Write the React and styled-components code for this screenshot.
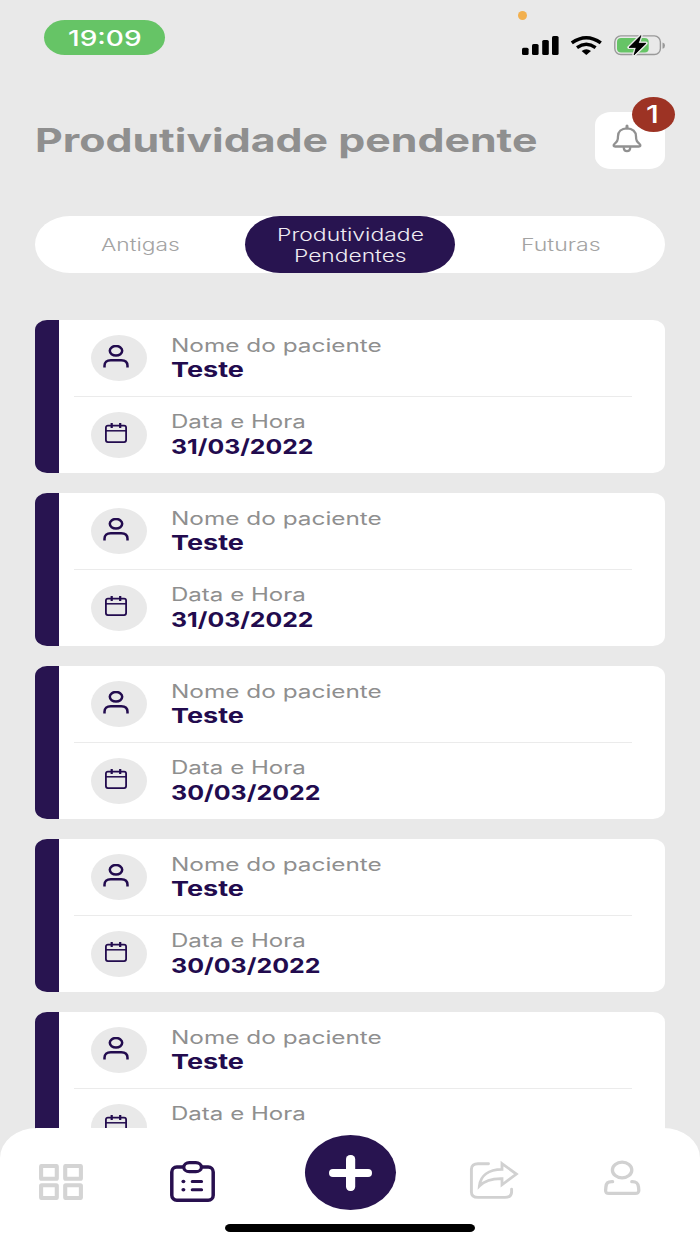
import React, {useLayoutEffect, useRef, useState} from 'react';
import styled, {createGlobalStyle} from 'styled-components';


const GlobalStyle = createGlobalStyle`
    * {
        box-sizing: border-box;
    }
    body {
        margin: 0;
        background-color: #e9e9e9;
        font-family: Inter, "Liberation Sans", sans-serif;
    }
    svg {
        display: block;
        flex-shrink: 0;
    }
`;

const Screen = styled.div`
    position: relative;
    width: 700px;
    height: 1244px;
    overflow: hidden;
    background-color: #e9e9e9;
`;

const WideBox = styled.span`
    display: block;
    width: ${({$width}) => $width}px;
    white-space: nowrap;
`;

const WideInner = styled.span`
    display: inline-block;
    transform-origin: 0 50%;
`;

const StatusBar = styled.div`
    display: flex;
    justify-content: space-between;
    height: 70px;
    padding: 20px 35px 0 44px;
`;

const Clock = styled.div`
    display: flex;
    justify-content: center;
    width: 121px;
    height: 35px;
    border-radius: 21px / 17.5px;
    background-color: #66c466;
    color: #fff;
    font-size: 22px;
    font-weight: 500;
    line-height: 36px;
`;

const StatusIcons = styled.div`
    display: flex;
    gap: 11px;
    padding-top: 15px;
`;

const RecordingDot = styled.span`
    position: absolute;
    left: 518px;
    top: 11px;
    width: 9px;
    height: 9px;
    border-radius: 50%;
    background-color: #f2b04f;
`;

const Header = styled.header`
    display: flex;
    justify-content: space-between;
    align-items: center;
    margin-top: 42px;
    height: 57px;
    padding: 0 35px 0 35px;
`;

const Title = styled.h1`
    margin: 0;
    color: #8f8f8f;
    font-size: 32px;
    font-weight: 700;
    line-height: 57px;
`;

const BellButton = styled.button`
    position: relative;
    display: flex;
    justify-content: center;
    width: 70px;
    height: 57px;
    padding: 12px 6px 0 0;
    border: 0;
    border-radius: 16px / 13px;
    background-color: #fff;
`;

const Badge = styled.span`
    position: absolute;
    top: -15px;
    right: -10px;
    display: flex;
    justify-content: center;
    width: 43px;
    height: 35px;
    padding-right: 5px;
    border-radius: 50%;
    background-color: #9d3324;
    color: #fff;
    font-family: Inter, "Liberation Sans", sans-serif;
    font-size: 24px;
    font-weight: 500;
    line-height: 35px;
`;

const Tabs = styled.div`
    display: flex;
    margin: 47px 35px 0;
    height: 57px;
    border-radius: 35px / 28.5px;
    background-color: #fff;
`;

const Tab = styled.div`
    display: flex;
    flex: 1;
    flex-direction: column;
    align-items: center;
    justify-content: center;
    padding: 2px 0 0 1px;
    border-radius: 35px / 28.5px;
    background-color: ${({$active}) => $active ? '#281450' : 'transparent'};
    color: ${({$active}) => $active ? '#efecf3' : '#a3a3a3'};
    font-size: 17px;
    font-weight: 300;
    line-height: 21px;
`;

const List = styled.main`
    display: flex;
    flex-direction: column;
    gap: 20px;
    padding: 47px 35px 0;
`;

const Card = styled.section`
    flex-shrink: 0;
    height: 153px;
    padding: 0 33.5px 0 39px;
    border-radius: 12px / 10px;
    background: linear-gradient(to right, #281450 24.5px, #fff 24.5px);
`;

const Row = styled.div`
    display: flex;
    align-items: center;
    height: ${({$last}) => $last ? 75 : 76}px;
    padding-left: 17px;
`;

const Divider = styled.div`
    height: 1px;
    background-color: #ebebeb;
`;

const IconCircle = styled.div`
    display: flex;
    align-items: center;
    justify-content: center;
    width: 56px;
    height: 46px;
    padding: 0 6px 4px 0;
    border-radius: 50%;
    background-color: #e9e9e9;
`;

const Info = styled.div`
    display: flex;
    flex-direction: column;
    padding: 0 0 0 24px;
`;

const Label = styled.span`
    color: #8f8f8f;
    font-size: 18px;
    line-height: 24.5px;
`;

const Value = styled.span`
    color: #220b4e;
    font-size: 20.5px;
    font-weight: 700;
    line-height: 24.5px;
`;

const NavBar = styled.nav`
    position: absolute;
    left: 0;
    bottom: 0;
    display: grid;
    grid-template-columns: 122px 141px 175px 112px 144px;
    grid-template-rows: 96px 8px;
    justify-items: center;
    width: 700px;
    height: 116px;
    border-radius: 37px 37px 0 0 / 30px 30px 0 0;
    background-color: #fff;
`;

const NavItem = styled.div`
    padding-top: ${({$top}) => $top}px;
`;

const AddButton = styled.div`
    display: flex;
    align-items: center;
    justify-content: center;
    width: 91px;
    height: 75px;
    border-radius: 50%;
    background-color: #281450;
`;

const HomeIndicator = styled.div`
    grid-column: 1 / -1;
    width: 250px;
    height: 8px;
    margin-left: 6px;
    border-radius: 5px / 4px;
    background-color: #000;
`;

// Stretches the text horizontally to the given width
const WideText = ({width, children}) => {
    const inner = useRef(null);
    const [scale, setScale] = useState(1);

    useLayoutEffect(() => {
        setScale(width / inner.current.offsetWidth);
    }, [width, children]);

    return (
        <WideBox $width={width}>
            <WideInner ref={inner} style={{transform: `scaleX(${scale})`}}>{children}</WideInner>
        </WideBox>
    );
};

const SignalIcon = () => (
    <svg width="37" height="20" viewBox="0 0 37 20">
        <rect x="0" y="12.7" width="6.6" height="7.3" rx="1.6"/>
        <rect x="10" y="9" width="6.6" height="11" rx="1.6"/>
        <rect x="20.2" y="5" width="6.6" height="15" rx="1.6"/>
        <rect x="30" y="1" width="6.6" height="19" rx="1.6"/>
    </svg>
);

const WifiIcon = () => (
    <svg width="33" height="20" viewBox="0 0 33 20">
        <path d="M1.8 7.9 Q16.3 -2.4 30.8 7.9" fill="none" stroke="#000" strokeWidth="3.6"/>
        <path d="M7 12.7 Q16.3 6 25.6 12.7" fill="none" stroke="#000" strokeWidth="3.4"/>
        <path d="M11.6 16.1 Q16.3 12.6 21 16.1 L16.3 20 Z"/>
    </svg>
);

const BatteryIcon = () => (
    <svg width="51" height="22" viewBox="0 0 51 22">
        <rect x="0.8" y="0.9" width="45.6" height="18.6" rx="6" fill="none" stroke="#999" strokeWidth="1.4"/>
        <rect x="3" y="3" width="31.7" height="14.4" rx="4" fill="#66c466"/>
        <path d="M48.5 7.6 Q51 8 51 10.6 Q51 13.2 48.5 13.7 Z" fill="#999"/>
        <path d="M27 0.5 L15 12.4 H22.2 L20 20 L32 8.3 H24.3 Z" fill="#000" stroke="#e9e9e9" strokeWidth="3.4" paintOrder="stroke" strokeLinejoin="round"/>
        <path d="M27 0.5 L15 12.4 H22.2 L20 20 L32 8.3 H24.3 Z" fill="#000" stroke="#000" strokeWidth="0.6" strokeLinejoin="round"/>
    </svg>
);

const BellIcon = () => (
    <svg width="30" height="30" viewBox="0 0 30 30" fill="none" stroke="#919191" strokeWidth="2.3" strokeLinecap="round" strokeLinejoin="round">
        <path d="M15 1.9 V4" strokeWidth="3"/>
        <path d="M15 4.3 C9.4 4.3 6 7.6 6 12.2 C6 16.6 5 17.6 2.4 20 C1 21.4 1.6 22.5 3.2 22.5 H26.8 C28.4 22.5 29 21.4 27.6 20 C25 17.6 24 16.6 24 12.2 C24 7.6 20.6 4.3 15 4.3 Z"/>
        <path d="M11.8 24 C12 28.2 18 28.2 18.2 24"/>
    </svg>
);

const PersonIcon = () => (
    <svg width="26" height="23" viewBox="0 0 26 23" fill="none" stroke="#220b4e" strokeWidth="2.5">
        <ellipse cx="13" cy="5.8" rx="6.2" ry="4.8"/>
        <path d="M1.5 22.6 V20.8 C1.5 17 3.8 15.2 7.8 15.2 H18.2 C22.2 15.2 24.5 17 24.5 20.8 V22.6"/>
    </svg>
);

const CalendarIcon = () => (
    <svg width="22" height="20" viewBox="0 0 22 20" fill="none" stroke="#220b4e" strokeWidth="1.8">
        <rect x="0.9" y="2.6" width="20.2" height="16.5" rx="2"/>
        <path d="M1 7.8 H21" strokeWidth="1.5"/>
        <path d="M6.7 0 V5 M15.2 0 V5" strokeWidth="2.2"/>
    </svg>
);

const GridIcon = () => (
    <svg width="44" height="36" viewBox="0 0 44 36" fill="none" stroke="#d4d4d4" strokeWidth="4.1">
        <rect x="2.1" y="2" width="15.7" height="12.8" rx="0.5"/>
        <rect x="26.2" y="2" width="15.7" height="12.8" rx="0.5"/>
        <rect x="2.1" y="21.2" width="15.7" height="12.8" rx="0.5"/>
        <rect x="26.2" y="21.2" width="15.7" height="12.8" rx="0.5"/>
    </svg>
);

const ClipboardIcon = () => (
    <svg width="45" height="41" viewBox="0 0 45 41" fill="none" stroke="#28104f" strokeWidth="3.5">
        <rect x="1.8" y="6" width="41.4" height="33.2" rx="5"/>
        <rect x="13.8" y="1.7" width="17.6" height="9" rx="5.5" ry="4.5" fill="#fff" strokeWidth="3.2"/>
        <path d="M22.2 20.5 H31.6 M22.2 28.8 H31.6" strokeWidth="3" strokeLinecap="round"/>
        <ellipse cx="13.4" cy="20.5" rx="2" ry="1.7" fill="#28104f" stroke="none"/>
        <ellipse cx="13.4" cy="28.8" rx="2" ry="1.7" fill="#28104f" stroke="none"/>
    </svg>
);

const PlusIcon = () => (
    <svg width="43" height="36" viewBox="0 0 43 36" fill="#fff">
        <rect x="17" y="0" width="9.2" height="36" rx="4.2"/>
        <rect x="0" y="14.1" width="43" height="7.8" rx="3.9"/>
    </svg>
);

const ShareIcon = () => (
    <svg width="50" height="40" viewBox="0 0 50 40" fill="none" stroke="#d1d1d1" strokeWidth="2.9" strokeLinecap="round">
        <path d="M19.5 3.8 H9 C4.8 3.8 2.4 5.8 2.4 9.2 V32 C2.4 35.4 4.8 37.4 9 37.4 H36 C40.2 37.4 42.6 35.4 42.6 32 V29.2"/>
        <path d="M33 3.6 L47.4 14 L33 24.8 V18.6 C24 18.4 15.5 20.8 10.4 26 C11.4 15.6 19.6 9.6 33 9.4 Z" strokeWidth="2.8"/>
    </svg>
);

const ProfileIcon = () => (
    <svg width="38" height="36" viewBox="0 0 38 36" fill="none" stroke="#d1d1d1" strokeWidth="3.3" strokeLinecap="round">
        <ellipse cx="19.1" cy="10" rx="9.7" ry="7.9"/>
        <path d="M9.6 21.6 C4.4 21.4 3.4 23.2 2.9 27 L2.6 30.4 C2.5 32.6 3.6 33.4 6 33.4 H32.2 C34.6 33.4 35.9 32.6 35.8 30.4 L35.5 27 C35 23.2 33.8 21.4 28.8 21.6"/>
    </svg>
);

const appointments = [
    {name: 'Teste', date: '31/03/2022', dateWidth: 143},
    {name: 'Teste', date: '31/03/2022', dateWidth: 143},
    {name: 'Teste', date: '30/03/2022', dateWidth: 150},
    {name: 'Teste', date: '30/03/2022', dateWidth: 150},
    {name: 'Teste', date: '30/03/2022', dateWidth: 150}
];

const AppointmentCard = ({name, date, dateWidth}) => (
    <Card>
        <Row>
            <IconCircle><PersonIcon/></IconCircle>
            <Info>
                <Label><WideText width={211}>Nome do paciente</WideText></Label>
                <Value><WideText width={72.5}>{name}</WideText></Value>
            </Info>
        </Row>
        <Divider/>
        <Row $last>
            <IconCircle><CalendarIcon/></IconCircle>
            <Info>
                <Label><WideText width={135}>Data e Hora</WideText></Label>
                <Value><WideText width={dateWidth}>{date}</WideText></Value>
            </Info>
        </Row>
    </Card>
);

export default function App() {
    return (
        <Screen>
            <GlobalStyle/>
            <StatusBar>
                <Clock><WideText width={74}>19:09</WideText></Clock>
                <StatusIcons>
                    <SignalIcon/>
                    <WifiIcon/>
                    <BatteryIcon/>
                </StatusIcons>
                <RecordingDot/>
            </StatusBar>
            <Header>
                <Title><WideText width={502}>Produtividade pendente</WideText></Title>
                <BellButton>
                    <BellIcon/>
                    <Badge><WideText width={13}>1</WideText></Badge>
                </BellButton>
            </Header>
            <Tabs>
                <Tab><WideText width={79}>Antigas</WideText></Tab>
                <Tab $active>
                    <WideText width={147}>Produtividade</WideText>
                    <WideText width={112.5}>Pendentes</WideText>
                </Tab>
                <Tab><WideText width={80}>Futuras</WideText></Tab>
            </Tabs>
            <List>
                {appointments.map((item, i) => <AppointmentCard key={i} {...item}/>)}
            </List>
            <NavBar>
                <NavItem $top={36}><GridIcon/></NavItem>
                <NavItem $top={33}><ClipboardIcon/></NavItem>
                <NavItem $top={7}><AddButton><PlusIcon/></AddButton></NavItem>
                <NavItem $top={32}><ShareIcon/></NavItem>
                <NavItem $top={32}><ProfileIcon/></NavItem>
                <HomeIndicator/>
            </NavBar>
        </Screen>
    );
}
